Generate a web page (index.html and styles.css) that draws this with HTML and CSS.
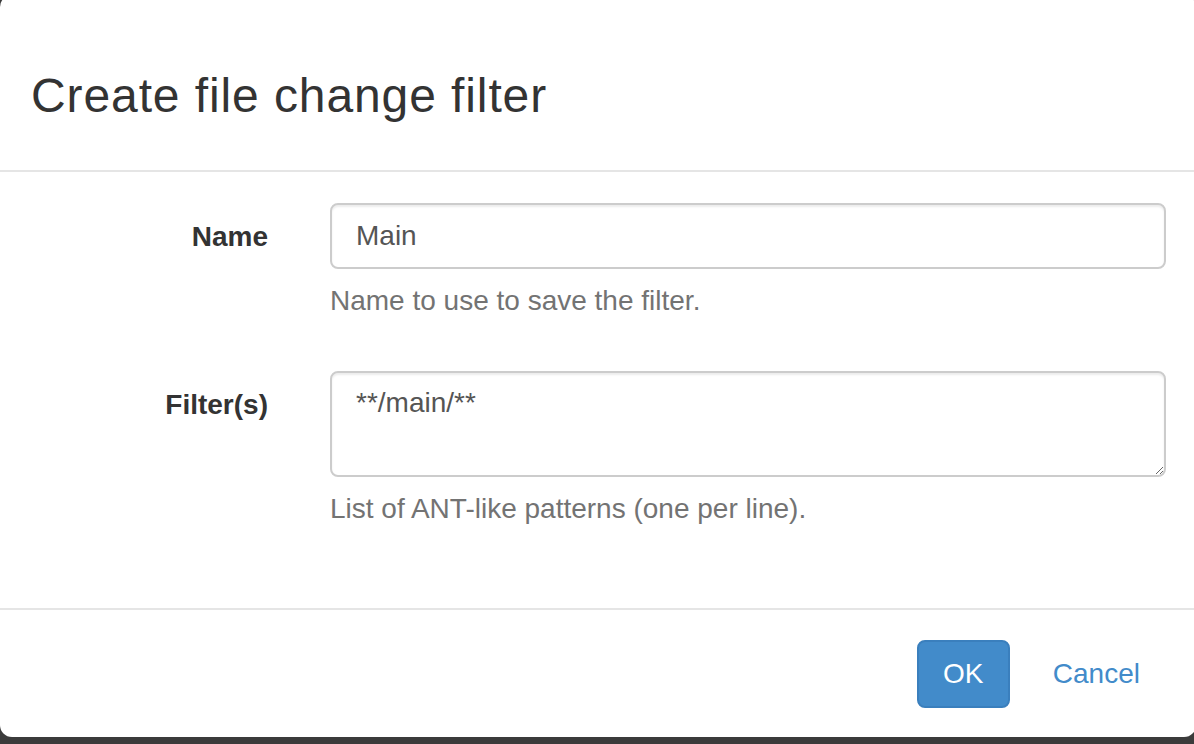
FILE: index.html
```html
<!DOCTYPE html>
<html>
<head>
<meta charset="utf-8">
<link rel="stylesheet" href="styles.css">
</head>
<body>
<div class="modal">
  <div class="modal-header">
    <h3 class="modal-title">Create file change filter</h3>
  </div>
  <div class="modal-body">
    <div class="form-group">
      <label class="control-label">Name</label>
      <div class="field">
        <input class="form-control" type="text" value="Main">
        <p class="help-block">Name to use to save the filter.</p>
      </div>
    </div>
    <div class="form-group">
      <label class="control-label">Filter(s)</label>
      <div class="field">
        <textarea class="form-control textarea">**/main/**</textarea>
        <p class="help-block">List of ANT-like patterns (one per line).</p>
      </div>
    </div>
  </div>
  <div class="modal-footer">
    <button class="btn btn-primary">OK</button>
    <button class="btn btn-link">Cancel</button>
  </div>
</div>
</body>
</html>
```

FILE: styles.css
```css
html, body {
  margin: 0;
  padding: 0;
  height: 744px;
  overflow: hidden;
  background: #3b3b3b;
}
body {
  font-family: "Liberation Sans", Arial, sans-serif;
  color: #333;
}
.modal {
  box-sizing: border-box;
  width: 1196px;
  height: 742px;
  margin-top: -5px;
  background: #fff;
  border-radius: 12px;
  display: flex;
  flex-direction: column;
}
.modal-header {
  padding: 74px 31px 47px;
  border-bottom: 2px solid #e5e5e5;
}
.modal-title {
  margin: 0;
  font-size: 48px;
  font-weight: 400;
  line-height: 54px;
  letter-spacing: 0.9px;
  color: #333;
}
.modal-body {
  flex: 1;
  padding: 31px 30px 0 0;
}
.form-group {
  display: grid;
  grid-template-columns: 268px 1fr;
  column-gap: 62px;
  margin-bottom: 30px;
}
.control-label {
  text-align: right;
  font-weight: 700;
  font-size: 28px;
  line-height: 40px;
  padding-top: 14px;
}
.field {
  display: flex;
  flex-direction: column;
}
.form-control {
  box-sizing: border-box;
  display: block;
  width: 836px;
  height: 66px;
  padding: 12px 24px;
  font-family: inherit;
  font-size: 28px;
  line-height: 40px;
  color: #555;
  background: #fff;
  border: 2px solid #ccc;
  border-radius: 8px;
  box-shadow: inset 0 2px 2px rgba(0,0,0,0.075);
  outline: none;
  margin: 0;
}
.textarea {
  height: 106px;
  resize: vertical;
  padding-top: 10px;
}
.help-block {
  margin: 12px 0 20px;
  font-size: 28px;
  line-height: 40px;
  color: #737373;
}
.modal-footer {
  display: flex;
  justify-content: flex-end;
  align-items: center;
  padding: 30px 30px 29px;
  border-top: 2px solid #e5e5e5;
  gap: 17px;
}
.btn {
  font-family: inherit;
  font-size: 28px;
  line-height: 40px;
  padding: 12px 24px;
  border-radius: 8px;
  border: 2px solid transparent;
  cursor: pointer;
  margin: 0;
}
.btn-primary {
  background: #428bca;
  border-color: #3a7fbd;
  color: #fff;
  width: 93px;
  height: 68px;
}
.btn-link {
  background: transparent;
  color: #428bca;
  padding: 12px 24px;
}
```
